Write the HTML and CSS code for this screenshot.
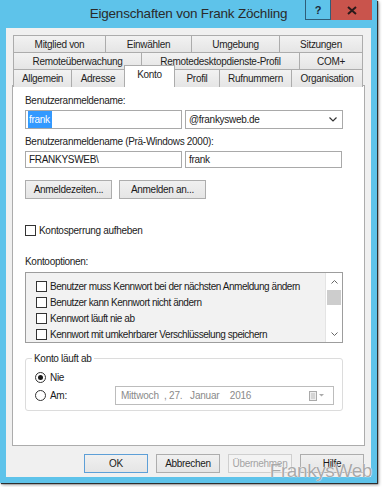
FILE: index.html
```html
<!DOCTYPE html>
<html lang="de">
<head>
<meta charset="utf-8">
<link rel="stylesheet" href="styles.css">
</head>
<body>
<div class="window">
  <div class="titlebar">
    <div class="title">Eigenschaften von Frank Zöchling</div>
    <div class="caption-btns">
      <div class="cbtn help">?</div>
      <div class="cbtn close">
        <svg width="10" height="9" viewBox="0 0 10 9"><path d="M1 1 L9 8 M9 1 L1 8" stroke="#2a1a1a" stroke-width="2"/></svg>
      </div>
    </div>
  </div>
  <div class="client">
    <div class="tabs">
      <div class="tabrow r1">
        <div class="tab">Mitglied von</div>
        <div class="tab">Einwählen</div>
        <div class="tab">Umgebung</div>
        <div class="tab">Sitzungen</div>
      </div>
      <div class="tabrow r2">
        <div class="tab">Remoteüberwachung</div>
        <div class="tab">Remotedesktopdienste-Profil</div>
        <div class="tab">COM+</div>
      </div>
      <div class="tabrow r3">
        <div class="tab">Allgemein</div>
        <div class="tab">Adresse</div>
        <div class="tab active">Konto</div>
        <div class="tab">Profil</div>
        <div class="tab">Rufnummern</div>
        <div class="tab">Organisation</div>
      </div>
    </div>
    <div class="panel">
      <div class="label l1">Benutzeranmeldename:</div>
      <div class="fieldrow">
        <div class="input"><span class="sel">frank</span></div>
        <div class="input combo"><span>@frankysweb.de</span>
          <svg width="8" height="5" viewBox="0 0 8 5"><path d="M0.5 0.5 L4 4 L7.5 0.5" fill="none" stroke="#333" stroke-width="1.2"/></svg>
        </div>
      </div>
      <div class="label l2">Benutzeranmeldename (Prä-Windows 2000):</div>
      <div class="fieldrow">
        <div class="input short">FRANKYSWEB\</div>
        <div class="input short">frank</div>
      </div>
      <div class="btnrow">
        <div class="btn">Anmeldezeiten...</div>
        <div class="btn">Anmelden an...</div>
      </div>
      <label class="check unlock"><span class="box"></span>Kontosperrung aufheben</label>
      <div class="label l3">Kontooptionen:</div>
      <div class="listbox">
        <div class="items">
          <div class="item"><span class="box"></span>Benutzer muss Kennwort bei der nächsten Anmeldung ändern</div>
          <div class="item"><span class="box"></span>Benutzer kann Kennwort nicht ändern</div>
          <div class="item"><span class="box"></span>Kennwort läuft nie ab</div>
          <div class="item"><span class="box"></span>Kennwort mit umkehrbarer Verschlüsselung speichern</div>
        </div>
        <div class="scrollbar">
          <div class="arrow"><svg width="7" height="4" viewBox="0 0 7 4"><path d="M0.5 3.5 L3.5 0.5 L6.5 3.5" fill="none" stroke="#666" stroke-width="1"/></svg></div>
          <div class="track"><div class="thumb"></div></div>
          <div class="arrow"><svg width="7" height="4" viewBox="0 0 7 4"><path d="M0.5 0.5 L3.5 3.5 L6.5 0.5" fill="none" stroke="#666" stroke-width="1"/></svg></div>
        </div>
      </div>
      <fieldset class="group">
        <legend>Konto läuft ab</legend>
        <div class="radio"><span class="dot on"></span>Nie</div>
        <div class="radiorow">
          <div class="radio"><span class="dot"></span>Am:</div>
          <div class="date">
            <span class="dtext">Mittwoch&nbsp;&nbsp;, 27.&nbsp;&nbsp;&nbsp;Januar&nbsp;&nbsp;&nbsp;&nbsp;2016</span>
            <span class="cal">
              <svg width="16" height="10" viewBox="0 0 16 10"><rect x="0.5" y="0.5" width="7" height="9" fill="#eee" stroke="#aaa"/><path d="M2 3h4M2 5h4M2 7h4" stroke="#bbb"/><path d="M10 3 L12.5 5.5 L15 3z" fill="#aaa"/></svg>
            </span>
          </div>
        </div>
      </fieldset>
    </div>
    <div class="footer">
      <div class="btn dlg focus">OK</div>
      <div class="btn dlg">Abbrechen</div>
      <div class="btn dlg disabled">Übernehmen</div>
      <div class="btn dlg">Hilfe</div>
    </div>
  </div>
  <div class="watermark">FrankysWeb</div>
</div>
</body>
</html>
```

FILE: styles.css
```css
* { box-sizing: border-box; }
html, body { margin: 0; padding: 0; background: #ffffff; }
body {
  width: 382px;
  height: 487px;
  overflow: hidden;
  font-family: "Liberation Sans", Arial, sans-serif;
  font-size: 10px;
  color: #1a1a1a;
}
.window {
  position: relative;
  width: 377px;
  height: 483px;
  background: #5ec3ea;
  box-shadow: 1px 1px 1px #2e2e2e, 2px 2px 3px rgba(0,0,0,0.35);
  display: flex;
  flex-direction: column;
  padding: 0 6px 6px 6px;
}
.titlebar {
  height: 28px;
  position: relative;
  display: flex;
  justify-content: center;
}
.title {
  font-family: "Liberation Sans", Arial, sans-serif;
  font-size: 13.5px;
  color: #2a2a2a;
  padding-top: 6px;
  letter-spacing: -0.2px;
}
.caption-btns {
  position: absolute;
  right: -1px;
  top: 0;
  display: flex;
}
.cbtn {
  height: 20px;
  display: flex;
  align-items: center;
  justify-content: center;
}
.help {
  width: 26px;
  border: 1px solid #2f5d79;
  border-top: none;
  font-weight: bold;
  font-size: 11px;
  color: #1a2a3a;
}
.close {
  width: 41px;
  background: #c9544c;
}
.client {
  flex: 1;
  background: #f0f0f0;
  padding: 7px 6px 0 6px;
  display: flex;
  flex-direction: column;
}
.tabs { display: flex; flex-direction: column; padding: 0 2px 0 1px; }
.tabrow { display: grid; height: 17px; }
.r1 { grid-template-columns: 93px 86px 88px 1fr; }
.r2 { grid-template-columns: 129px 158px 1fr; }
.r3 { grid-template-columns: 59px 53px 50px 45px 72px 1fr; height: 17px; position: relative; z-index: 2; }
.tab {
  border: 1px solid #acacac;
  border-bottom: none;
  border-left: none;
  background: linear-gradient(#f2f2f2, #e5e5e5);
  display: flex;
  align-items: center;
  justify-content: center;
  font-size: 10px;
  color: #1e1e1e;
  letter-spacing: -0.3px;
}
.tab:first-child { border-left: 1px solid #acacac; }
.r3 .tab.active {
  background: #ffffff;
  margin-top: -4px;
  height: 22px;
  border-left: 1px solid #acacac;
  margin-left: -1px;
  align-items: flex-start;
  padding-top: 3px;
}
.panel {
  background: #ffffff;
  border: 1px solid #acacac;
  height: 361px;
  padding: 8px 0 0 12px;
  display: flex;
  flex-direction: column;
  margin-top: -1px;
}
.label { height: 14px; line-height: 14px; color: #222; letter-spacing: -0.3px; }
.fieldrow { display: flex; gap: 3px; margin-top: 2px; }
.input {
  width: 157px;
  height: 19px;
  border: 1px solid #a9a9a9;
  background: #fff;
  display: flex;
  align-items: center;
  padding-left: 2px;
  letter-spacing: -0.3px;
}
.input.short { height: 17px; padding-left: 3px; }
.sel { background: #3399ff; color: #fff; padding: 3px 2px 3px 1px; }
.combo { width: 158px; justify-content: space-between; padding-right: 5px; padding-left: 3px; }
.l2 { margin-top: 6px; }
.btnrow { display: flex; gap: 7px; margin-top: 12px; }
.btn {
  height: 19px;
  border: 1px solid #adadad;
  background: linear-gradient(#f0f0f0, #e5e5e5);
  display: flex;
  align-items: center;
  justify-content: center;
  letter-spacing: -0.3px;
}
.btnrow .btn { width: 87px; }
.box {
  width: 11px;
  height: 11px;
  border: 1px solid #333;
  background: #fff;
  display: inline-block;
  margin-right: 3px;
  flex-shrink: 0;
}
.check { display: flex; align-items: center; margin-top: 26px; letter-spacing: -0.3px; }
.l3 { margin-top: 19px; }
.listbox {
  width: 318px;
  height: 71px;
  border: 1px solid #9d9d9d;
  background: #f2f2f2;
  margin-top: 3px;
  display: flex;
}
.items { flex: 1; padding: 5px 0 0 10px; }
.item {
  height: 16px;
  display: flex;
  align-items: center;
  letter-spacing: -0.45px;
  white-space: nowrap;
}
.scrollbar {
  width: 17px;
  background: #fff;
  display: flex;
  flex-direction: column;
  border-left: 1px solid #e4e4e4;
}
.arrow { height: 17px; display: flex; align-items: center; justify-content: center; }
.track { flex: 1; }
.thumb { margin: 0 1px; height: 15px; background: #cdcdcd; }
.group {
  width: 318px;
  height: 58px;
  margin: 10px 0 0 0;
  padding: 5px 0 0 9px;
  border: 1px solid #dcdcdc;
  border-radius: 3px;
}
.group legend {
  padding: 0 2px;
  margin-left: -3px;
  letter-spacing: -0.3px;
  color: #222;
}
.radio { display: flex; align-items: center; height: 17px; letter-spacing: -0.3px; }
.radiorow { display: flex; align-items: center; gap: 48px; }
.dot {
  width: 11px;
  height: 11px;
  border-radius: 50%;
  border: 1px solid #333;
  background: #fff;
  margin-right: 4px;
  position: relative;
}
.dot.on::after {
  content: "";
  position: absolute;
  left: 2px; top: 2px;
  width: 5px; height: 5px;
  border-radius: 50%;
  background: #1a1a1a;
}
.date {
  width: 219px;
  height: 19px;
  border: 1px solid #bcbcbc;
  background: #fff;
  display: flex;
  align-items: center;
  justify-content: space-between;
  padding: 0 8px 0 5px;
  color: #8a8a8a;
  letter-spacing: -0.2px;
}
.cal { display: flex; align-items: center; }
.footer {
  display: flex;
  justify-content: flex-end;
  gap: 8px;
  padding: 8px 1px 0 0;
}
.dlg { width: 64px; height: 19px; }
.focus { border-color: #5d9fd7; }
.disabled { color: #a4a4a4; border-color: #cfcfcf; background: #f3f3f3; }
.watermark {
  position: absolute;
  right: 5px;
  bottom: 1px;
  font-family: "Liberation Sans", Arial, sans-serif;
  font-size: 19px;
  color: #a9a9a9;
  text-shadow: 0 0 1px #ffffff, 0 0 1px #ffffff;
  letter-spacing: -0.4px;
}
```
